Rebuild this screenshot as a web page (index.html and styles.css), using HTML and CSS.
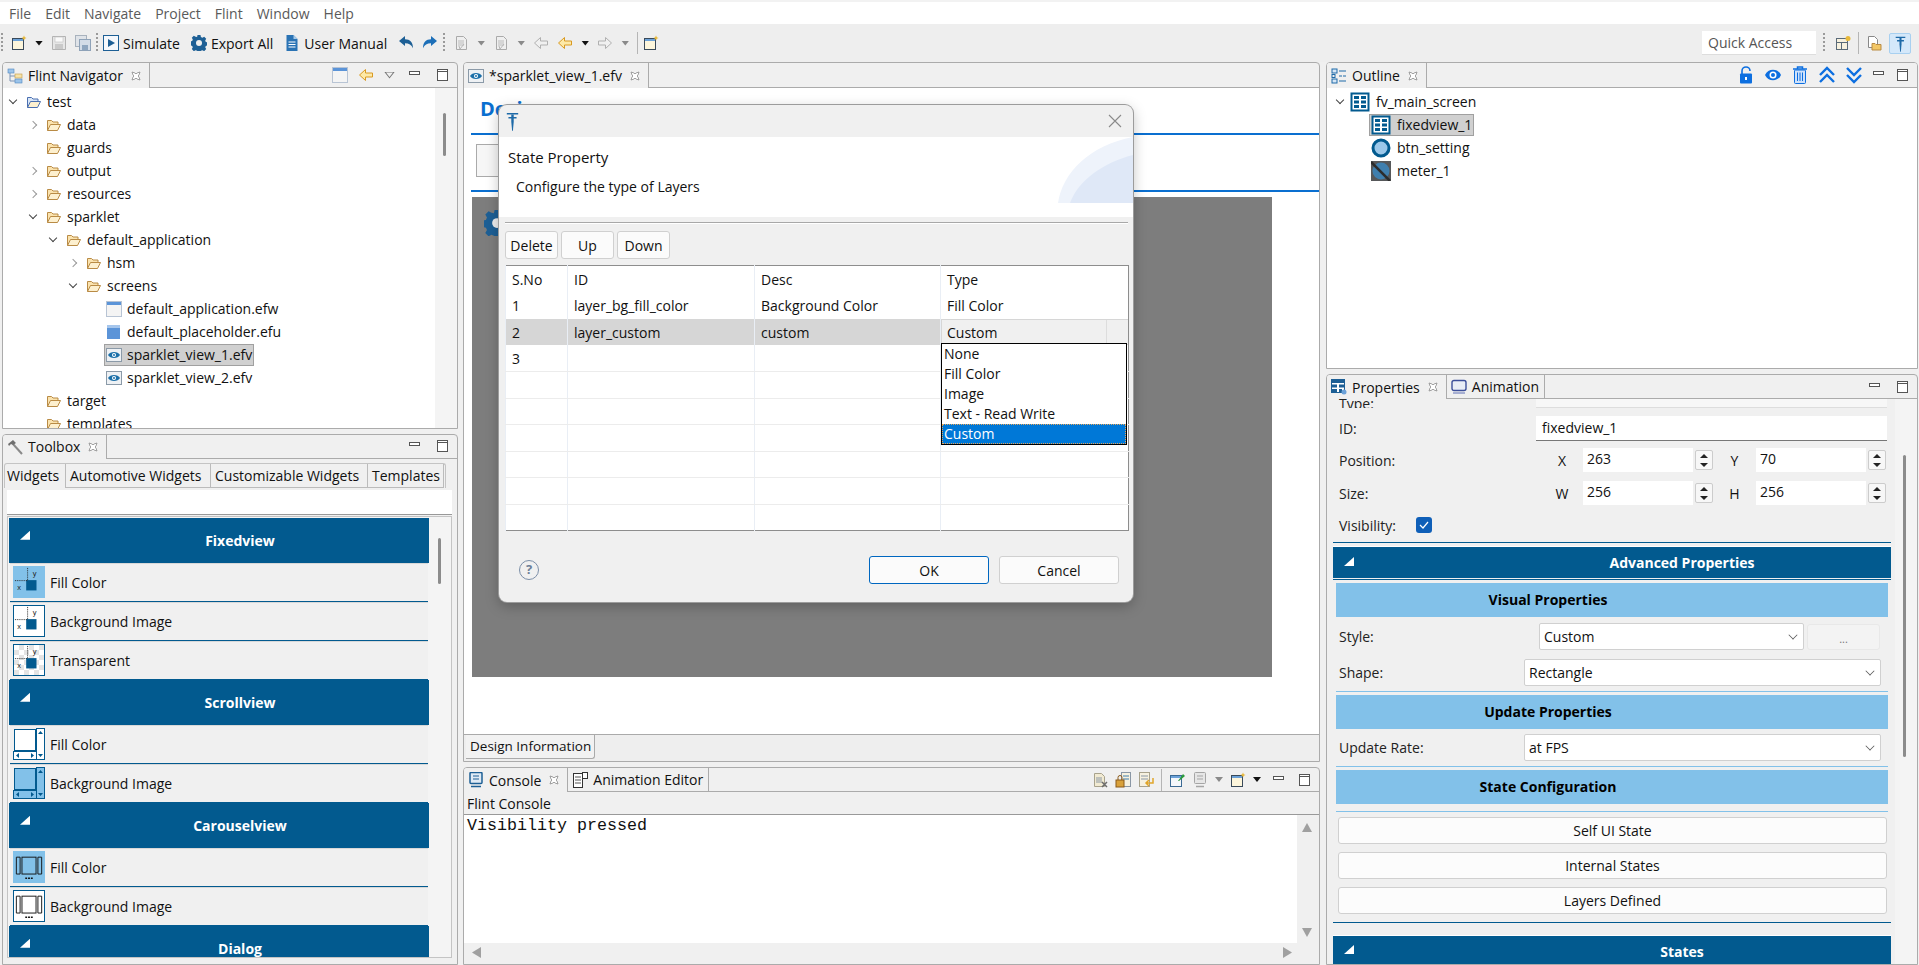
FILE: index.html
```html
<!DOCTYPE html>
<html lang="en">
<head>
  <meta charset="UTF-8">
  <title>Flint</title>
  <link rel="stylesheet" href="styles.css">
</head>
<body>
  <!-- shared icons -->
  <svg class="sprite" width="0" height="0">
    <symbol id="i-folder" viewBox="0 0 16 16"><path d="M1.500 13.500V3.500h4l1.500 1.500h5v2" fill="#fbe3ae" stroke="#b98b45"/><path d="M1.500 13.500l3-6h10l-3 6z" fill="#fdf0cf" stroke="#b98b45"/></symbol>
    <symbol id="i-project" viewBox="0 0 16 16"><path d="M1.500 13.500V3.500h4l1.500 1.500h5v2" fill="#d9e6f7" stroke="#4a6fb0"/><path d="M1.500 13.500l3-6h10l-3 6z" fill="#fdf0cf" stroke="#4a6fb0"/></symbol>
    <symbol id="i-view" viewBox="0 0 16 16"><rect x=".5" y="1.500" width="15" height="13" fill="#eef1f4" stroke="#8b9aa8"/><path d="M2 8c2-4 10-4 12 0-2 4-10 4-12 0z" fill="#1b6fa8"/><circle cx="8" cy="8" r="2" fill="#fff"/><circle cx="8" cy="8" r="1" fill="#1b6fa8"/></symbol>
    <symbol id="i-window" viewBox="0 0 16 16"><rect x=".5" y=".5" width="15" height="15" fill="#f4f4f4" stroke="#b8c4d4"/><rect x="1" y="1" width="14" height="3" fill="#5b94d8"/></symbol>
    <symbol id="i-unit" viewBox="0 0 16 16"><rect x="1" y="1" width="13" height="14" fill="#5b94d8"/><rect x="1" y="1" width="13" height="3" fill="#a6c6ec"/></symbol>
    <symbol id="i-nav" viewBox="0 0 16 16"><path d="M3 4v9h5M3 8h5" fill="none" stroke="#7a93b5"/><rect x="1" y="1" width="6" height="4" fill="#9cc4ea" stroke="#4e86c0" stroke-width=".6"/><rect x="8" y="6" width="7" height="4" fill="#f6e2a8" stroke="#c39a45" stroke-width=".6"/><rect x="8" y="11" width="7" height="4" fill="#9cc4ea" stroke="#4e86c0" stroke-width=".6"/></symbol>
    <symbol id="i-close" viewBox="0 0 10 10"><path d="M1 1l3 1 1 1 1-1 3-1-1 3-1 1 1 1 1 3-3-1-1-1-1 1-3 1 1-3 1-1-1-1z" fill="#fff" stroke="#8a8a8a" stroke-width=".8"/></symbol>
    <symbol id="i-min" viewBox="0 0 14 14"><rect x="1.500" y="3.500" width="10" height="3" fill="#fff" stroke="#555"/></symbol>
    <symbol id="i-max" viewBox="0 0 14 14"><rect x="2.500" y="1.500" width="10" height="11" fill="#fff" stroke="#555"/><path d="M2.500 3.500h10" stroke="#555"/></symbol>
    <symbol id="i-new" viewBox="0 0 16 16"><rect x="1.500" y="3.500" width="11" height="11" fill="#fdf6dc" stroke="#3a4a5a"/><rect x="2" y="4" width="10" height="2" fill="#6ba1d8"/><path d="M13 .5l.8 1.700 1.700.8-1.700.8-.8 1.700-.8-1.700-1.700-.8 1.700-.8z" fill="#e8b93a"/></symbol>
    <symbol id="i-save" viewBox="0 0 16 16"><path d="M1.500 1.500h13v13h-13z" fill="#e6e6e6" stroke="#b3b3b3"/><rect x="4" y="2" width="8" height="5" fill="#fafafa" stroke="#c0c0c0" stroke-width=".6"/><rect x="4" y="9" width="8" height="5" fill="#c9c9c9"/></symbol>
    <symbol id="i-saveall" viewBox="0 0 16 16"><rect x=".5" y=".5" width="11" height="11" fill="#dfe3e8" stroke="#a8b2bd"/><rect x="4.500" y="4.500" width="11" height="11" fill="#d3dce8" stroke="#8ea2b8"/><rect x="7" y="10" width="6" height="5" fill="#8fa6c0"/></symbol>
    <symbol id="i-play" viewBox="0 0 16 16"><rect x=".5" y=".5" width="15" height="15" fill="#f5f8fc" stroke="#1d5f95"/><path d="M5 4l7 4-7 4z" fill="#1d5f95"/></symbol>
    <symbol id="i-gear" viewBox="0 0 16 16"><path d="M6.500 0h3l.4 2 1.500.7 1.800-1 2 2.100-1 1.800.6 1.500 2 .4v2.900l-2 .5-.6 1.400 1 1.800-2 2.100-1.800-1-1.500.6-.4 2h-3l-.4-2-1.500-.6-1.800 1-2-2.100 1-1.800-.6-1.400-2-.5V6.500l2-.4.600-1.500-1-1.800 2-2.100 1.800 1L6.100 2z" fill="#1d5f95"/><circle cx="8" cy="8" r="3" fill="#eee"/></symbol>
    <symbol id="i-doc" viewBox="0 0 16 16"><path d="M2.500 0h7l4 4v12h-11z" fill="#2a73b4"/><path d="M9.500 0v4h4z" fill="#a9cbe8"/><path d="M4.500 7h7M4.500 9.500h7M4.500 12h7" stroke="#fff"/></symbol>
    <symbol id="i-undo" viewBox="0 0 16 16"><path d="M1 6l6-5v3.300c5 0 8 3 8 9-1.500-3.500-4-5-8-5V11z" fill="#1d5f95"/></symbol>
    <symbol id="i-redo" viewBox="0 0 16 16"><path d="M15 6L9 1v3.300c-5 0-8 3-8 9 1.500-3.500 4-5 8-5V11z" fill="#1d6fb8"/></symbol>
    <symbol id="i-ghostdoc" viewBox="0 0 16 16"><path d="M3.500 1.500h7l3 3v10h-10z" fill="#efefef" stroke="#aaa"/><path d="M5 6h6M5 8h6M5 10h6" stroke="#bbb"/><path d="M6 11l1 3 4-5" fill="none" stroke="#b5b5b5"/></symbol>
    <symbol id="i-arrowl" viewBox="0 0 16 16"><path d="M1.500 8l6-5.500V6h7v4h-7v3.500z" fill="#f0f0f0" stroke="#b0b0b0"/></symbol>
    <symbol id="i-arrowr" viewBox="0 0 16 16"><path d="M14.500 8l-6-5.500V6h-7v4h7v3.500z" fill="#f0f0f0" stroke="#b0b0b0"/></symbol>
    <symbol id="i-arrowy" viewBox="0 0 16 16"><path d="M1.500 8l6-5.500V6h7v4h-7v3.500z" fill="#fde9a8" stroke="#d99a22"/></symbol>
    <symbol id="i-pin" viewBox="0 0 16 16"><rect x="1.500" y="3.500" width="11" height="11" fill="#f4f7fb" stroke="#3b6a94"/><rect x="2" y="4" width="10" height="2" fill="#6ba1d8"/><path d="M9 9l5-7 2 2-6 5z" fill="#2a9a3a"/></symbol>
    <symbol id="i-table" viewBox="0 0 20 20"><rect x="1.500" y="1.500" width="17" height="17" fill="#fff" stroke="#025a8f" stroke-width="2"/><path d="M4 4h5v3H4zM11 4h5v3h-5zM4 8.500h5v3H4zM11 8.500h5v3h-5zM4 13h5v3H4zM11 13h5v3h-5z" fill="#025a8f"/></symbol>
    <symbol id="i-button" viewBox="0 0 20 20"><circle cx="10" cy="10" r="8" fill="#9cc8ea" stroke="#025a8f" stroke-width="3"/></symbol>
    <symbol id="i-meter" viewBox="0 0 20 20"><rect width="20" height="20" fill="#56585a"/><circle cx="10" cy="10" r="8.500" fill="#3f7fae"/><path d="M0 1l19 19" stroke="#2c2c2c" stroke-width="2.500"/></symbol>
    <symbol id="i-outline" viewBox="0 0 16 16"><rect x="1" y="1" width="5" height="4" fill="#d5e6f6" stroke="#1e6aa8"/><rect x="1" y="11" width="5" height="4" fill="#d5e6f6" stroke="#1e6aa8"/><rect x="1" y="6.500" width="3" height="3" fill="none" stroke="#1e6aa8"/><path d="M8 3h7M8 8h3M12 8h3M8 13h7" stroke="#1e6aa8"/></symbol>
    <symbol id="i-lock" viewBox="0 0 14 18"><path d="M3 8V5a4 4 0 0 1 8 0" fill="none" stroke="#0d6fe0" stroke-width="1.600"/><rect x="1" y="7.500" width="12" height="10" rx="1" fill="#0d6fe0"/><rect x="6" y="11" width="2" height="3" fill="#fff"/></symbol>
    <symbol id="i-eye" viewBox="0 0 18 14"><path d="M1 7c3-7 13-7 16 0-3 7-13 7-16 0z" fill="#0d6fe0"/><circle cx="9" cy="7" r="3.500" fill="#fff"/><circle cx="9" cy="7" r="2" fill="#0d6fe0"/></symbol>
    <symbol id="i-trash" viewBox="0 0 16 18"><path d="M1 3h14M5.500 3V1h5v2" fill="none" stroke="#0d6fe0" stroke-width="1.500"/><rect x="2.500" y="4" width="11" height="13.500" rx="1" fill="#cfe2fb" stroke="#0d6fe0"/><path d="M5.500 6.500v8.500M8 6.500v8.500M10.500 6.500v8.500" stroke="#0d6fe0"/></symbol>
    <symbol id="i-up" viewBox="0 0 18 18"><path d="M2 9l7-7 7 7M2 16l7-7 7 7" fill="none" stroke="#0d6fe0" stroke-width="2.400"/></symbol>
    <symbol id="i-down" viewBox="0 0 18 18"><path d="M2 2l7 7 7-7M2 9l7 7 7-7" fill="none" stroke="#0d6fe0" stroke-width="2.400"/></symbol>
    <symbol id="i-props" viewBox="0 0 16 16"><rect x=".5" y=".5" width="13" height="13" fill="#fff" stroke="#1d5f95"/><path d="M1 1h12v3H1zM1 5.500h5v3H1zM8 5.500h5v3H8zM1 10h5v3H1zM8 10h3v3H8z" fill="#1d5f95"/><circle cx="13" cy="13" r="2.500" fill="#6ba1d8"/></symbol>
    <symbol id="i-monitor" viewBox="0 0 16 16"><rect x="1" y="1.500" width="14" height="10" rx="2" fill="#e9edf6" stroke="#3d4f9a" stroke-width="1.400"/><path d="M2 14h12" stroke="#8f9ac8" stroke-width="1.500"/></symbol>
    <symbol id="i-console" viewBox="0 0 16 16"><rect x="2" y=".5" width="12" height="11" rx="1" fill="#dfeaf5" stroke="#1d5f95" stroke-width="1.500"/><path d="M5 4h6M5 7h6" stroke="#1d5f95"/><path d="M3 14.500h10" stroke="#1d5f95" stroke-width="1.500"/></symbol>
    <symbol id="i-anim" viewBox="0 0 16 16"><rect x="1.500" y="1.500" width="9" height="14" fill="#fff" stroke="#333"/><rect x="10.500" y=".5" width="5" height="6" fill="#fff" stroke="#333"/><path d="M3 5h6M3 8h6M3 11h6" stroke="#555"/></symbol>
    <symbol id="i-hammer" viewBox="0 0 16 16"><path d="M6 5l9 10" stroke="#8a8a8a" stroke-width="2"/><path d="M1 5l5-4 3 3-3 2-2-1-2 2z" fill="#6f6f6f"/></symbol>
    <symbol id="i-flint" viewBox="0 0 16 24"><path d="M1 2h14v2H1zM3 7h10v2H3z" fill="#1e6aa8"/><path d="M6.500 4h3v9l-1 11h-1l-1-11z" fill="#1e6aa8"/></symbol>
    <symbol id="i-persp" viewBox="0 0 16 16"><rect x="1.500" y="3.500" width="11" height="11" fill="#f7f1de" stroke="#5a6a78"/><path d="M1.500 7.500h11M6.500 7.500v7" stroke="#5a6a78"/><circle cx="13" cy="3.500" r="2.500" fill="#e8b93a"/></symbol>
    <symbol id="i-resource" viewBox="0 0 16 16"><path d="M2.500 1.500h6l3 3v8h-9z" fill="#fff" stroke="#888"/><path d="M6 8.500h3l1 1h5v5.500H6z" fill="#f3c766" stroke="#b98b45"/></symbol>
    <symbol id="i-cons1" viewBox="0 0 16 16"><path d="M2.500 1.500h7l3 3v10h-10z" fill="#f1ead2" stroke="#a8a28c"/><path d="M4 6h6M4 8h6M4 10h6" stroke="#8a97a5"/><path d="M10 10l5 5M15 10l-5 5" stroke="#6c6c6c" stroke-width="1.500"/></symbol>
    <symbol id="i-cons2" viewBox="0 0 16 16"><rect x="6.500" y=".5" width="9" height="14" fill="#f6f1e0" stroke="#8a97a5"/><path d="M8 4h6M8 7h6" stroke="#3f7fae"/><rect x="1" y="8" width="8" height="7" fill="#d9a13a" stroke="#8a5a1a"/><path d="M3 8V5.500a2 2 0 0 1 4 0V8" fill="none" stroke="#8a5a1a"/></symbol>
    <symbol id="i-cons3" viewBox="0 0 16 16"><rect x="1.500" y=".5" width="10" height="14" fill="#f6f1e0" stroke="#a8a28c"/><path d="M3 4h7M3 7h7" stroke="#8a97a5"/><path d="M15 6v5H9M11 8l-3 3 3 3" fill="none" stroke="#e0a52a" stroke-width="1.500"/></symbol>
    <symbol id="i-grey" viewBox="0 0 16 16"><rect x="2.500" y=".5" width="11" height="11" rx="1" fill="#e6e6e6" stroke="#a5a5a5"/><path d="M5 4h6M5 7h6" stroke="#a5a5a5"/><path d="M4 14.500h8" stroke="#a5a5a5" stroke-width="1.500"/></symbol>
    <symbol id="tile-fixed" viewBox="0 0 32 32"><rect x="13" y="14" width="11" height="11" fill="#025a8f"/><path d="M14.500 1v13M1 14.500h13" stroke="#222" stroke-dasharray="1 1" fill="none"/><text x="20" y="10" font-size="8" font-family="Liberation Sans" fill="#222">y</text><text x="3.500" y="24" font-size="8" font-family="Liberation Sans" fill="#222">x</text></symbol>
    <symbol id="tile-scroll" viewBox="0 0 32 32"><rect x="1.500" y="1.500" width="21" height="21" fill="currentColor" stroke="#025a8f"/><rect x="23.500" y=".5" width="8" height="31" fill="currentColor" stroke="#025a8f"/><rect x=".5" y="23.500" width="23" height="8" fill="currentColor" stroke="#025a8f"/><path d="M27.500 3l2.500 3h-5zM27.500 29l2.500-3h-5zM3 27.500l3-2.500v5zM21 27.500l-3-2.500v5z" fill="#025a8f"/></symbol>
    <symbol id="tile-carousel" viewBox="0 0 32 32"><rect x="8.500" y="5.500" width="15" height="18" fill="currentColor" stroke="#111"/><path d="M2.500 5.500h4v18h-4zM25.500 5.500h4v18h-4z" fill="none" stroke="#111"/><path d="M12 28h2M15 28h2M18 28h2" stroke="#111" stroke-width="1.500"/></symbol>
  </svg>

  <div class="menubar">
    <span>File</span><span>Edit</span><span>Navigate</span><span>Project</span><span>Flint</span><span>Window</span><span>Help</span>
  </div>

  <div class="toolbar">
    <i class="grip"></i>
    <svg class="ic16"><use href="#i-new"/></svg>
    <i class="caret dark"></i>
    <svg class="ic16"><use href="#i-save"/></svg>
    <svg class="ic16"><use href="#i-saveall"/></svg>
    <i class="grip tight"></i>
    <span class="tb-btn tight"><svg class="ic16"><use href="#i-play"/></svg>Simulate</span>
    <span class="tb-btn wide"><svg class="ic16"><use href="#i-gear"/></svg>Export All</span>
    <span class="tb-btn wide"><svg class="ic16"><use href="#i-doc"/></svg>User Manual</span>
    <svg class="ic16 wide"><use href="#i-undo"/></svg>
    <svg class="ic16"><use href="#i-redo"/></svg>
    <i class="grip tight"></i>
    <svg class="ic16"><use href="#i-ghostdoc"/></svg>
    <i class="caret"></i>
    <svg class="ic16"><use href="#i-ghostdoc"/></svg>
    <i class="caret"></i>
    <svg class="ic16"><use href="#i-arrowl"/></svg>
    <svg class="ic16"><use href="#i-arrowy"/></svg>
    <i class="caret dark"></i>
    <svg class="ic16"><use href="#i-arrowr"/></svg>
    <i class="caret"></i>
    <i class="tb-sep"></i>
    <svg class="ic16 tight"><use href="#i-new"/></svg>
    <div class="tb-right">
      <span class="quick">Quick Access</span>
      <i class="grip"></i>
      <svg class="ic16 wide"><use href="#i-persp"/></svg>
      <i class="tb-sep"></i>
      <svg class="ic16"><use href="#i-resource"/></svg>
      <span class="persp-on"><svg class="ic-flint"><use href="#i-flint"/></svg></span>
    </div>
  </div>

  <div class="workspace">
    <div class="col col-left">
      <section class="panel nav-panel">
        <div class="tabs">
          <div class="tab"><svg class="ic16"><use href="#i-nav"/></svg>Flint Navigator<svg class="ic-x"><use href="#i-close"/></svg></div>
          <div class="view-tools">
            <svg class="ic16"><use href="#i-window"/></svg>
            <svg class="ic16"><use href="#i-arrowy"/></svg>
            <i class="view-menu"></i>
            <svg class="ic14"><use href="#i-min"/></svg>
            <svg class="ic14"><use href="#i-max"/></svg>
          </div>
        </div>
        <div class="tree-wrap">
          <div class="tree">
            <div class="row d0"><i class="chev open"></i><span class="node"><svg class="ic16"><use href="#i-project"/></svg>test</span></div>
            <div class="row d1"><i class="chev"></i><span class="node"><svg class="ic16"><use href="#i-folder"/></svg>data</span></div>
            <div class="row d1"><i class="chev none"></i><span class="node"><svg class="ic16"><use href="#i-folder"/></svg>guards</span></div>
            <div class="row d1"><i class="chev"></i><span class="node"><svg class="ic16"><use href="#i-folder"/></svg>output</span></div>
            <div class="row d1"><i class="chev"></i><span class="node"><svg class="ic16"><use href="#i-folder"/></svg>resources</span></div>
            <div class="row d1"><i class="chev open"></i><span class="node"><svg class="ic16"><use href="#i-folder"/></svg>sparklet</span></div>
            <div class="row d2"><i class="chev open"></i><span class="node"><svg class="ic16"><use href="#i-folder"/></svg>default_application</span></div>
            <div class="row d3"><i class="chev"></i><span class="node"><svg class="ic16"><use href="#i-folder"/></svg>hsm</span></div>
            <div class="row d3"><i class="chev open"></i><span class="node"><svg class="ic16"><use href="#i-folder"/></svg>screens</span></div>
            <div class="row d4"><i class="chev none"></i><span class="node"><svg class="ic16"><use href="#i-window"/></svg>default_application.efw</span></div>
            <div class="row d4"><i class="chev none"></i><span class="node"><svg class="ic16"><use href="#i-unit"/></svg>default_placeholder.efu</span></div>
            <div class="row d4"><i class="chev none"></i><span class="node selected"><svg class="ic16"><use href="#i-view"/></svg>sparklet_view_1.efv</span></div>
            <div class="row d4"><i class="chev none"></i><span class="node"><svg class="ic16"><use href="#i-view"/></svg>sparklet_view_2.efv</span></div>
            <div class="row d1"><i class="chev none"></i><span class="node"><svg class="ic16"><use href="#i-folder"/></svg>target</span></div>
            <div class="row d1"><i class="chev none"></i><span class="node"><svg class="ic16"><use href="#i-folder"/></svg>templates</span></div>
          </div>
          <div class="vbar nav-bar"><i class="thumb"></i></div>
        </div>
      </section>

      <section class="panel toolbox">
        <div class="tabs short">
          <div class="tab"><svg class="ic16"><use href="#i-hammer"/></svg>Toolbox<svg class="ic-x"><use href="#i-close"/></svg></div>
          <div class="view-tools">
            <svg class="ic14"><use href="#i-min"/></svg>
            <svg class="ic14"><use href="#i-max"/></svg>
          </div>
        </div>
        <div class="palette-tabs">
          <span class="ptab active">Widgets</span><span class="ptab w2">Automotive Widgets</span><span class="ptab w3">Customizable Widgets</span><span class="ptab w4">Templates</span>
        </div>
        <div class="filter"></div>
        <div class="palette">
          <div class="palette-list">
            <div class="drawer"><i class="tri"></i>Fixedview</div>
            <div class="item"><span class="tile sky"><svg><use href="#tile-fixed"/></svg></span>Fill Color</div>
            <div class="item"><span class="tile"><svg><use href="#tile-fixed"/></svg></span>Background Image</div>
            <div class="item"><span class="tile checker"><svg><use href="#tile-fixed"/></svg></span>Transparent</div>
            <div class="drawer"><i class="tri"></i>Scrollview</div>
            <div class="item"><span class="tile plain"><svg class="c-white"><use href="#tile-scroll"/></svg></span>Fill Color</div>
            <div class="item"><span class="tile plain"><svg class="c-sky"><use href="#tile-scroll"/></svg></span>Background Image</div>
            <div class="drawer"><i class="tri"></i>Carouselview</div>
            <div class="item"><span class="tile sky"><svg class="c-sky"><use href="#tile-carousel"/></svg></span>Fill Color</div>
            <div class="item"><span class="tile"><svg class="c-white"><use href="#tile-carousel"/></svg></span>Background Image</div>
            <div class="drawer last"><i class="tri"></i>Dialog</div>
          </div>
          <div class="vbar palette-bar"><i class="thumb"></i></div>
        </div>
      </section>
    </div>

    <div class="col col-mid">
      <section class="panel editor">
        <div class="tabs">
          <div class="tab"><svg class="ic16"><use href="#i-view"/></svg>*sparklet_view_1.efv<svg class="ic-x"><use href="#i-close"/></svg></div>
        </div>
        <div class="editor-body">
          <h2 class="design-title">Design</h2>
          <div class="design-tools"><div class="design-box"></div></div>
          <div class="canvas-wrap">
            <div class="canvas"><svg class="canvas-gear"><use href="#i-gear"/></svg></div>
          </div>
          <div class="editor-tabs"><span class="etab">Design Information</span></div>
        </div>
      </section>

      <section class="panel console">
        <div class="tabs short">
          <div class="tab"><svg class="ic16"><use href="#i-console"/></svg>Console<svg class="ic-x"><use href="#i-close"/></svg></div>
          <div class="tab off"><svg class="ic16"><use href="#i-anim"/></svg>Animation Editor</div>
          <div class="view-tools console-tools">
            <svg class="ic16"><use href="#i-cons1"/></svg>
            <svg class="ic16"><use href="#i-cons2"/></svg>
            <svg class="ic16"><use href="#i-cons3"/></svg>
            <i class="tb-sep"></i>
            <svg class="ic16"><use href="#i-pin"/></svg>
            <svg class="ic16"><use href="#i-grey"/></svg>
            <i class="caret"></i>
            <svg class="ic16"><use href="#i-new"/></svg>
            <i class="caret dark"></i>
            <svg class="ic14"><use href="#i-min"/></svg>
            <svg class="ic14"><use href="#i-max"/></svg>
          </div>
        </div>
        <div class="console-title">Flint Console</div>
        <div class="console-main">
          <pre class="console-out">Visibility pressed</pre>
          <div class="console-vbar"><i class="sb-up"></i><i class="sb-down"></i></div>
        </div>
        <div class="console-hbar"><i class="sb-left"></i><i class="sb-right"></i></div>
      </section>
    </div>

    <div class="col col-right">
      <section class="panel outline">
        <div class="tabs">
          <div class="tab"><svg class="ic16"><use href="#i-outline"/></svg>Outline<svg class="ic-x"><use href="#i-close"/></svg></div>
          <div class="view-tools outline-tools">
            <svg class="ic-o lock"><use href="#i-lock"/></svg>
            <svg class="ic-o"><use href="#i-eye"/></svg>
            <svg class="ic-o"><use href="#i-trash"/></svg>
            <svg class="ic-o"><use href="#i-up"/></svg>
            <svg class="ic-o"><use href="#i-down"/></svg>
            <svg class="ic14"><use href="#i-min"/></svg>
            <svg class="ic14"><use href="#i-max"/></svg>
          </div>
        </div>
        <div class="outline-tree">
          <div class="row o0"><i class="chev open"></i><span class="node"><svg class="ic20"><use href="#i-table"/></svg>fv_main_screen</span></div>
          <div class="row o1"><span class="node selected"><svg class="ic20"><use href="#i-table"/></svg>fixedview_1</span></div>
          <div class="row o1"><span class="node"><svg class="ic20"><use href="#i-button"/></svg>btn_setting</span></div>
          <div class="row o1"><span class="node"><svg class="ic20"><use href="#i-meter"/></svg>meter_1</span></div>
        </div>
      </section>

      <section class="panel properties">
        <div class="tabs short">
          <div class="tab"><svg class="ic16"><use href="#i-props"/></svg>Properties<svg class="ic-x"><use href="#i-close"/></svg></div>
          <div class="tab off"><svg class="ic16"><use href="#i-monitor"/></svg>Animation</div>
          <div class="view-tools">
            <svg class="ic14"><use href="#i-min"/></svg>
            <svg class="ic14"><use href="#i-max"/></svg>
          </div>
        </div>
        <div class="props-wrap">
          <div class="props">
            <div class="form-row cut"><span class="lbl">Type:</span><span class="text-input"></span></div>
            <div class="form-row r-id"><span class="lbl">ID:</span><span class="text-input">fixedview_1</span></div>
            <div class="form-row r-pos">
              <span class="lbl">Position:</span>
              <span class="axis">X</span><span class="num">263</span><span class="spin"><i></i><i class="dn"></i></span>
              <span class="axis second">Y</span><span class="num">70</span><span class="spin"><i></i><i class="dn"></i></span>
            </div>
            <div class="form-row r-size">
              <span class="lbl">Size:</span>
              <span class="axis">W</span><span class="num">256</span><span class="spin"><i></i><i class="dn"></i></span>
              <span class="axis second">H</span><span class="num">256</span><span class="spin"><i></i><i class="dn"></i></span>
            </div>
            <div class="form-row r-vis"><span class="lbl auto">Visibility:</span><span class="check"><svg width="10" height="8" viewBox="0 0 10 8"><path d="M1 4l3 3 5-6" fill="none" stroke="#fff" stroke-width="1.200"/></svg></span></div>

            <div class="section-head"><i class="tri"></i>Advanced Properties</div>
            <div class="band">Visual Properties</div>
            <div class="form-row r-style"><span class="lbl style">Style:</span><span class="combo c-style">Custom<i class="down"></i></span><span class="more">...</span></div>
            <div class="form-row r-shape"><span class="lbl shape">Shape:</span><span class="combo">Rectangle<i class="down"></i></span></div>
            <div class="rule"></div>
            <div class="band">Update Properties</div>
            <div class="form-row r-rate"><span class="lbl shape">Update Rate:</span><span class="combo">at FPS<i class="down"></i></span></div>
            <div class="rule"></div>
            <div class="band">State Configuration</div>
            <div class="rule r2"></div>
            <button class="wide-btn">Self UI State</button>
            <button class="wide-btn">Internal States</button>
            <button class="wide-btn">Layers Defined</button>
            <div class="section-head states"><i class="tri"></i>States</div>
          </div>
          <div class="vbar props-bar"><i class="thumb"></i></div>
        </div>
      </section>
    </div>
  </div>

  <!-- State Property dialog -->
  <div class="dialog">
    <div class="dlg-title">
      <svg class="dlg-logo"><use href="#i-flint"/></svg>
      <svg class="dlg-close" viewBox="0 0 14 14"><path d="M1 1l12 12M13 1L1 13" stroke="#8a8a8a" stroke-width="1.100"/></svg>
    </div>
    <div class="dlg-banner">
      <h3>State Property</h3>
      <p>Configure the type of Layers</p>
      <svg class="dlg-art" viewBox="0 0 75 66"><path d="M0 66C4 36 32 8 75 0v66z" fill="#eef3fb"/><path d="M12 66C20 44 44 26 75 18v48z" fill="#dfe8f7"/></svg>
    </div>
    <div class="dlg-body">
      <div class="dlg-sep"></div>
      <div class="dlg-actions"><button>Delete</button><button>Up</button><button>Down</button></div>
      <table class="layers">
        <colgroup><col class="c1"><col class="c2"><col class="c3"><col class="c4"></colgroup>
        <thead><tr><th>S.No</th><th>ID</th><th>Desc</th><th>Type</th></tr></thead>
        <tbody>
          <tr class="first"><td>1</td><td>layer_bg_fill_color</td><td>Background Color</td><td>Fill Color</td></tr>
          <tr class="current"><td>2</td><td>layer_custom</td><td>custom</td>
            <td class="combo-cell">
              <div class="cell-combo"><span>Custom</span><i></i></div>
              <ul class="cell-list">
                <li>None</li><li>Fill Color</li><li>Image</li><li>Text - Read Write</li><li class="on">Custom</li>
              </ul>
            </td></tr>
          <tr><td>3</td><td></td><td></td><td></td></tr>
          <tr><td></td><td></td><td></td><td></td></tr>
          <tr><td></td><td></td><td></td><td></td></tr>
          <tr><td></td><td></td><td></td><td></td></tr>
          <tr><td></td><td></td><td></td><td></td></tr>
          <tr><td></td><td></td><td></td><td></td></tr>
          <tr class="end"><td></td><td></td><td></td><td></td></tr>
        </tbody>
      </table>
      <div class="dlg-foot">
        <span class="help">?</span>
        <button class="primary">OK</button>
        <button>Cancel</button>
      </div>
    </div>
  </div>
</body>
</html>
```

FILE: styles.css
```css
* {
  box-sizing: border-box;
}

html, body {
  margin: 0;
  padding: 0;
  height: 965px;
  overflow: hidden;
}

body {
  font-family: "Open Sans", "Noto Sans", sans-serif;
  font-size: 14px;
  color: #111;
  background-color: #f0f0f0;
  display: flex;
  flex-direction: column;
}

i {
  display: block;
  font-style: normal;
}

button {
  font: inherit;
  color: inherit;
}

.sprite {
  position: absolute;
}

.ic14 { width: 14px; height: 14px; flex: none; }
.ic16 { width: 16px; height: 16px; flex: none; }
.ic20 { width: 20px; height: 20px; flex: none; }
.ic-x { width: 10px; height: 10px; flex: none; margin-left: 8px; }

/* menu + main toolbar */
.menubar {
  height: 24px;
  background-color: #fff;
  border-top: 2px solid #f2f2f2;
  display: flex;
  align-items: center;
  padding-left: 9px;
  gap: 14px;
  color: #5a5a5a;
  flex: none;
}

.toolbar {
  height: 38px;
  flex: none;
  display: flex;
  align-items: center;
  gap: 8px;
  background-color: #eee;
  padding-left: 1px;
  white-space: nowrap;
}

.toolbar .tight { margin-left: -3px; }
.toolbar .wide { margin-left: 3px; }

.grip {
  width: 2px;
  height: 20px;
  background-image: linear-gradient(#9a9a9a 50%, transparent 50%);
  background-size: 2px 4px;
}

.caret {
  width: 8px;
  height: 5px;
  flex: none;
  background-color: #8a8a8a;
  clip-path: polygon(0 0, 100% 0, 50% 100%);
}

.caret.dark { background-color: #111; }

.tb-sep {
  width: 1px;
  height: 22px;
  background-color: #b5b5b5;
  flex: none;
}

.tb-btn {
  display: flex;
  align-items: center;
  gap: 4px;
}

.tb-right {
  margin-left: auto;
  display: flex;
  align-items: center;
  gap: 7px;
  padding-right: 8px;
}

.quick {
  width: 114px;
  height: 24px;
  background-color: #fff;
  border-bottom: 1px solid #ddd;
  color: #555;
  padding-left: 6px;
  line-height: 23px;
}

.persp-on {
  width: 22px;
  height: 21px;
  background-color: #d4e8fa;
  border: 1px solid #a8d0f0;
  border-radius: 2px;
  display: flex;
  align-items: center;
  justify-content: center;
}

.ic-flint {
  width: 11px;
  height: 17px;
}

/* workbench */
.workspace {
  flex: 1;
  display: grid;
  grid-template-columns: 456px 857px 593px;
  column-gap: 5px;
  padding-left: 2px;
  min-height: 0;
}

.col {
  display: flex;
  flex-direction: column;
  gap: 5px;
  min-height: 0;
}

.col-right { margin-left: 1px; }

.panel {
  border: 1px solid #ababab;
  border-radius: 4px 4px 0 0;
  display: flex;
  flex-direction: column;
  background-color: #f0f0f0;
  min-height: 0;
  overflow: hidden;
}

.tabs {
  height: 25px;
  flex: none;
  display: flex;
  border-bottom: 1px solid #ababab;
}

.tabs.short { height: 24px; }

.tab {
  display: flex;
  align-items: center;
  gap: 5px;
  padding: 0 8px 0 4px;
  border-right: 1px solid #ababab;
  height: calc(100% + 1px);
  background-color: #f0f0f0;
  white-space: nowrap;
}

.tab .ic-x { margin-left: 3px; }

.tab.off {
  height: 100%;
  padding-right: 5px;
}

.view-tools {
  margin-left: auto;
  display: flex;
  align-items: center;
  gap: 10px;
  padding-right: 8px;
}

.view-tools .ic14 { margin-left: 3px; }

.view-menu {
  width: 11px;
  height: 7px;
  background-color: #777;
  clip-path: polygon(0 0, 100% 0, 50% 100%, 0 0, 2px 1px, 50% 80%, calc(100% - 2px) 1px, 2px 1px);
}

/* trees */
.tree-wrap {
  flex: 1;
  display: flex;
  min-height: 0;
}

.tree {
  flex: 1;
  background-color: #fff;
  padding: 2px 0 0;
  overflow: hidden;
}

.row {
  height: 23px;
  display: flex;
  align-items: center;
  white-space: nowrap;
}

.d0 { padding-left: 2px; }
.d1 { padding-left: 22px; }
.d2 { padding-left: 42px; }
.d3 { padding-left: 62px; }
.d4 { padding-left: 82px; }

.chev {
  width: 16px;
  height: 16px;
  flex: none;
  position: relative;
  margin-right: 3px;
}

.chev::after {
  content: "";
  position: absolute;
  left: 5px;
  top: 5px;
  width: 5px;
  height: 5px;
  border-right: 1px solid #9a9a9a;
  border-bottom: 1px solid #9a9a9a;
  transform: rotate(-45deg);
}

.chev.open::after {
  border-color: #444;
  transform: rotate(45deg);
  top: 3px;
}

.chev.none::after { display: none; }

.node {
  display: inline-flex;
  align-items: center;
  gap: 5px;
  height: 22px;
  padding: 0 2px;
}

.node.selected {
  background-color: #d0d0d0;
  border: 1px solid #a0a0a0;
  padding: 0 1px;
}

.vbar {
  width: 22px;
  flex: none;
  background-color: #f4f4f4;
  position: relative;
}

.thumb {
  position: absolute;
  width: 3px;
  background-color: #8c8c8c;
  border-radius: 2px;
}

.nav-bar .thumb { left: 8px; top: 25px; height: 43px; }

/* toolbox */
.palette-tabs {
  display: flex;
  height: 25px;
  flex: none;
  margin: 4px 6px 0 1px;
  border: 1px solid #c4c4c4;
  border-bottom: 0;
  border-radius: 3px 3px 0 0;
  width: 442px;
}

.ptab {
  width: 61px;
  padding-left: 2px;
  border-right: 1px solid #bbb;
  line-height: 23px;
  border-bottom: 1px solid #bbb;
}

.ptab.active { border-bottom: 0; }
.ptab.w2 { width: 145px; padding-left: 4px; }
.ptab.w3 { width: 157px; padding-left: 4px; }
.ptab.w4 { width: 76px; padding-left: 4px; }

.filter {
  height: 25px;
  flex: none;
  margin: 2px 5px 0 4px;
  background-color: #fff;
  border-bottom: 1px solid #999;
}

.palette {
  flex: 1;
  margin: 1px 5px 6px 4px;
  border: 1px solid #c4c4c4;
  padding: 1px 0 0 1px;
  display: flex;
  min-height: 0;
  background-color: #f4f4f4;
}

.palette-list {
  width: 420px;
  flex: none;
  overflow: hidden;
}

.drawer {
  height: 45px;
  background-color: #025a8f;
  color: #fff;
  font-weight: 700;
  text-align: center;
  padding: 13px 0 0 42px;
  position: relative;
}

.drawer.last { height: 42px; }

.tri {
  position: absolute;
  left: 11px;
  top: 13px;
  width: 10px;
  height: 9px;
  background-color: #fff;
  clip-path: polygon(100% 0, 100% 100%, 0 100%);
}

.item {
  height: 39px;
  margin: 0 1px;
  background-color: #f0f0f0;
  border-top: 1px solid #d8d8d8;
  border-bottom: 1px solid #025a8f;
  display: flex;
  align-items: center;
  gap: 5px;
  padding-left: 3px;
}

.tile {
  width: 32px;
  height: 32px;
  flex: none;
  background-color: #fff;
  border: 1px solid #025a8f;
}

.tile svg {
  width: 100%;
  height: 100%;
  display: block;
}

.tile.sky {
  background-color: #82c1e9;
  border-color: #82c1e9;
}

.tile.plain {
  background: none;
  border: 0;
}

.tile.checker {
  background-color: #fff;
  background-image: conic-gradient(#e4e4e4 25%, transparent 0 50%, #e4e4e4 0 75%, transparent 0);
  background-size: 10px 10px;
}

.c-white { color: #fff; }
.c-sky { color: #82c1e9; }

.palette-bar {
  flex: 1;
  width: auto;
}

.palette-bar .thumb { left: 9px; top: 20px; height: 46px; }

/* editor */
.editor { height: 700px; flex: none; }

.editor-body {
  flex: 1;
  display: flex;
  flex-direction: column;
  background-color: #fff;
  min-height: 0;
}

.design-title {
  margin: 0;
  height: 47px;
  padding: 7px 0 0 9px;
  border-bottom: 2px solid #0a6fd0;
  color: #0a6fd0;
  font-size: 20px;
  font-weight: 700;
  margin-left: 7px;
  line-height: 27px;
}

.design-tools {
  height: 57px;
  margin-left: 7px;
  padding: 9px 0 0 5px;
  border-bottom: 2px solid #0a6fd0;
  flex: none;
}

.design-box {
  width: 60px;
  height: 33px;
  border: 1px solid #aaa;
  background-color: #f6f6f6;
}

.canvas-wrap {
  flex: 1;
  padding: 5px 0 0 8px;
}

.canvas {
  width: 800px;
  height: 480px;
  background-color: #7d7d7d;
  position: relative;
}

.canvas-gear {
  position: absolute;
  left: 12px;
  top: 13px;
  width: 26px;
  height: 26px;
}

.editor-tabs {
  height: 27px;
  flex: none;
  background-color: #eee;
  border-top: 1px solid #aaa;
  padding-left: 2px;
}

.etab {
  display: inline-block;
  height: 24px;
  line-height: 22px;
  padding: 0 3px 0 4px;
  border-right: 1px solid #aaa;
  border-bottom: 1px solid #aaa;
  border-radius: 0 0 3px 0;
  background-color: #f2f2f2;
  font-size: 13.500px;
}

/* console */
.console { flex: 1; }

.console-tools { gap: 7px; }
.console-tools .ic14 { margin-left: 4px; }

.console-title {
  height: 23px;
  flex: none;
  padding-left: 3px;
  line-height: 23px;
  border-bottom: 1px solid #999;
}

.console-main {
  height: 128px;
  flex: none;
  display: flex;
}

.console-out {
  flex: 1;
  margin: 0;
  padding: 1px 0 0 3px;
  background-color: #fff;
  font-family: "Liberation Mono", monospace;
  font-size: 16.670px;
  line-height: 20px;
}

.console-vbar {
  width: 22px;
  flex: none;
  position: relative;
}

.sb-up, .sb-down, .sb-left, .sb-right {
  position: absolute;
  background-color: #a0a0a0;
}

.sb-up { left: 5px; top: 8px; width: 10px; height: 9px; clip-path: polygon(50% 0, 100% 100%, 0 100%); }
.sb-down { left: 5px; bottom: 6px; width: 10px; height: 9px; clip-path: polygon(0 0, 100% 0, 50% 100%); }

.console-hbar {
  height: 20px;
  flex: none;
  position: relative;
}

.sb-left { left: 8px; top: 4px; width: 9px; height: 11px; clip-path: polygon(0 50%, 100% 0, 100% 100%); }
.sb-right { left: 819px; top: 4px; width: 9px; height: 11px; clip-path: polygon(0 0, 100% 50%, 0 100%); }

/* outline */
.outline { height: 307px; flex: none; background-color: #fff; }
.outline .tabs { background-color: #f0f0f0; }

.outline-tools { gap: 9px; }
.outline-tools .ic14 { margin-left: 0; }

.ic-o { width: 18px; height: 18px; flex: none; }

.outline-tree { padding-top: 2px; }

.o0 { padding-left: 5px; }
.o0 .chev { margin-right: 0; }
.o1 { padding-left: 42px; }
.outline-tree .node { gap: 6px; }

/* properties */
.properties { flex: 1; }

.props-wrap {
  flex: 1;
  display: flex;
  min-height: 0;
}

.props {
  width: 564px;
  flex: none;
  padding-left: 6px;
  overflow: hidden;
}

.props-bar {
  flex: 1;
  width: auto;
  margin-left: 4px;
  background-color: #f4f4f4;
}

.props-bar .thumb { left: 8px; top: 56px; height: 302px; }

.form-row {
  display: flex;
  align-items: center;
  padding-left: 6px;
}

.lbl {
  width: 197px;
  flex: none;
  color: #222;
}

.lbl.auto { width: 77px; }
.lbl.style { width: 200px; }
.lbl.shape { width: 185px; }

.text-input {
  width: 351px;
  height: 25px;
  background-color: #fff;
  border-bottom: 1px solid #777;
  padding-left: 6px;
  line-height: 24px;
  flex: none;
}

.cut {
  height: 9px;
  overflow: hidden;
  align-items: flex-end;
}

.cut .lbl { margin-bottom: -5px; }
.cut .text-input { border-bottom-color: #ddd; background-color: #f7f7f7; }

.r-id { margin-top: 8px; height: 25px; }
.r-pos { margin-top: 7px; height: 24px; }
.r-size { margin-top: 9px; height: 24px; }
.r-vis { margin-top: 12px; height: 16px; }

.axis {
  width: 47px;
  padding-left: 5px;
  text-align: center;
  flex: none;
}

.axis.second {
  width: 43px;
  padding-left: 0;
}

.num {
  width: 110px;
  height: 24px;
  background-color: #fff;
  padding-left: 4px;
  line-height: 22px;
  flex: none;
}

.spin {
  width: 18px;
  height: 20px;
  margin-left: 2px;
  flex: none;
  border: 1px solid #ccc;
  border-radius: 2px;
  background-color: #f7f7f7;
  position: relative;
}

.spin i {
  position: absolute;
  left: 4px;
  top: 3px;
  width: 8px;
  height: 4px;
  background-color: #222;
  clip-path: polygon(50% 0, 100% 100%, 0 100%);
}

.spin i.dn {
  top: 12px;
  clip-path: polygon(0 0, 100% 0, 50% 100%);
}

.check {
  width: 16px;
  height: 16px;
  background-color: #0f5fb8;
  border-radius: 3px;
  display: flex;
  align-items: center;
  justify-content: center;
}

.section-head {
  height: 38px;
  margin-top: 9px;
  border-top: 1px solid #025a8f;
  border-bottom: 1px solid #025a8f;
  padding: 5px 0 1px;
  position: relative;
  background-clip: padding-box;
}

.section-head::before {
  content: "";
  position: absolute;
  left: 0;
  right: 0;
  top: 3px;
  bottom: 1px;
  background-color: #025a8f;
  border-top: 1px solid #fff;
}

.section-head {
  color: #fff;
  font-weight: 700;
  text-align: center;
  padding-left: 140px;
  line-height: 29px;
}

.section-head .tri {
  left: 11px;
  top: 14px;
}

.section-head > * { z-index: 1; }

.section-head {
  isolation: isolate;
}

.section-head::before { z-index: -1; }

.section-head.states {
  height: 45px;
  margin-top: 6px;
  border-bottom: 0;
  padding-top: 14px;
}

.section-head.states::before {
  top: 12px;
  bottom: 3px;
}

.section-head.states .tri { top: 22px; }

.band {
  height: 34px;
  margin: 3px 3px 0;
  background-color: #82c1e9;
  color: #000;
  font-weight: 700;
  text-align: center;
  padding-right: 128px;
  line-height: 33px;
}

.combo {
  width: 357px;
  height: 27px;
  flex: none;
  background-color: #fff;
  border: 1px solid #d0d0d0;
  border-radius: 2px;
  padding-left: 4px;
  line-height: 25px;
  position: relative;
}

.combo .down {
  position: absolute;
  right: 6px;
  top: 7px;
  width: 8px;
  height: 8px;
  border-right: 1px solid #555;
  border-bottom: 1px solid #555;
  transform: rotate(45deg) scale(.8);
}

.combo.c-style { width: 265px; }

.more {
  width: 73px;
  height: 26px;
  margin-left: 3px;
  flex: none;
  background-color: #f3f3f3;
  border: 1px solid #e8e8e8;
  border-radius: 3px;
  text-align: center;
  font-size: 11px;
  line-height: 28px;
  color: #777;
}

.r-style { margin-top: 6px; height: 27px; }
.r-shape { margin-top: 9px; height: 27px; }
.r-rate { margin-top: 5px; height: 27px; }

.rule {
  height: 1px;
  margin: 5px 3px 3px;
  background-color: #82c1e9;
}

.rule.r2 { margin: 7px 3px 5px; }

.wide-btn {
  display: block;
  width: 549px;
  height: 27px;
  margin: 0 0 8px 5px;
  background-color: #fcfcfc;
  border: 1px solid #d0d0d0;
  border-radius: 3px;
  padding: 0;
}

/* dialog */
.dialog {
  position: absolute;
  left: 499px;
  top: 105px;
  width: 634px;
  height: 497px;
  background-color: #f0f0f0;
  border-radius: 8px;
  box-shadow: 0 0 0 1px #9c9c9c, 0 4px 14px rgba(0,0,0,.25);
  display: flex;
  flex-direction: column;
  overflow: hidden;
}

.dlg-title {
  height: 32px;
  flex: none;
  display: flex;
  justify-content: space-between;
  align-items: flex-start;
  padding: 5px 11px 0 7px;
}

.dlg-logo {
  width: 13px;
  height: 22px;
}

.dlg-close {
  width: 14px;
  height: 14px;
  margin-top: 4px;
}

.dlg-banner {
  height: 80px;
  flex: none;
  background-color: #fff;
  padding-left: 9px;
  position: relative;
}

.dlg-banner h3 {
  margin: 0;
  padding-top: 9px;
  font-size: 15px;
  font-weight: 400;
  line-height: 22px;
}

.dlg-banner p {
  margin: 9px 0 0 8px;
  font-size: 14px;
  line-height: 20px;
}

.dlg-art {
  position: absolute;
  right: 0;
  top: 0;
  width: 75px;
  height: 66px;
}

.dlg-body {
  flex: 1;
  padding: 5px 5px 0 6px;
  display: flex;
  flex-direction: column;
}

.dlg-sep {
  height: 2px;
  flex: none;
  border-top: 1px solid #a8a8a8;
  border-bottom: 1px solid #fff;
}

.dlg-actions {
  display: flex;
  gap: 3px;
  margin-top: 7px;
  flex: none;
}

.dlg-actions button {
  width: 53px;
  height: 28px;
  background-color: #fbfbfb;
  border: 1px solid #d0d0d0;
  border-radius: 3px;
  padding: 0;
}

.layers {
  margin-top: 6px;
  width: 623px;
  height: 266px;
  flex: none;
  table-layout: fixed;
  border-collapse: collapse;
  border: 1px solid #8d8d8d;
  background-color: #fff;
}

.layers .c1 { width: 62px; }
.layers .c2 { width: 187px; }
.layers .c3 { width: 186px; }
.layers .c4 { width: 188px; }

.layers th, .layers td {
  height: 24px;
  padding: 0 0 0 6px;
  text-align: left;
  font-weight: 400;
  border-left: 1px solid #e9eef5;
  border-bottom: 1px solid #ececec;
}

.layers th {
  height: 27px;
  border-bottom: 0;
}

.layers tr.first td { border-bottom: 0; }

.layers tr.current td {
  background-color: #d6d6d6;
  border-bottom: 0;
}

.layers tr.end td { border-bottom: 0; }

.layers td.combo-cell {
  position: relative;
  padding: 0;
}

.cell-combo {
  margin-left: 1px;
  height: 24px;
  background-color: #f0f0f0;
  display: flex;
  align-items: center;
  padding-left: 5px;
  justify-content: space-between;
}

.cell-combo i {
  width: 22px;
  height: 100%;
  border-left: 1px solid #ddd;
}

.cell-list {
  position: absolute;
  left: 0;
  right: 1px;
  top: 24px;
  margin: 0;
  padding: 0;
  list-style: none;
  background-color: #fff;
  border: 1px solid #000;
  z-index: 2;
}

.cell-list li {
  height: 20px;
  line-height: 19px;
  padding-left: 2px;
}

.cell-list li.on {
  background-color: #0078d7;
  color: #fff;
  outline: 1px dotted #e8a65a;
  outline-offset: -1px;
}

.dlg-foot {
  display: flex;
  align-items: center;
  margin-top: 25px;
  flex: none;
}

.help {
  width: 20px;
  height: 20px;
  margin-left: 14px;
  border: 1.500px solid #7c8fa8;
  border-radius: 50%;
  color: #6c7f98;
  font-size: 13px;
  font-weight: 700;
  line-height: 17px;
  text-align: center;
}

.dlg-foot button {
  width: 120px;
  height: 28px;
  background-color: #fbfbfb;
  border: 1px solid #d0d0d0;
  border-radius: 3px;
  margin-left: 10px;
  padding: 0;
}

.dlg-foot button.primary {
  margin-left: auto;
  border: 1px solid #0067c0;
}

.dlg-foot button:last-child { margin-right: 9px; }
```
